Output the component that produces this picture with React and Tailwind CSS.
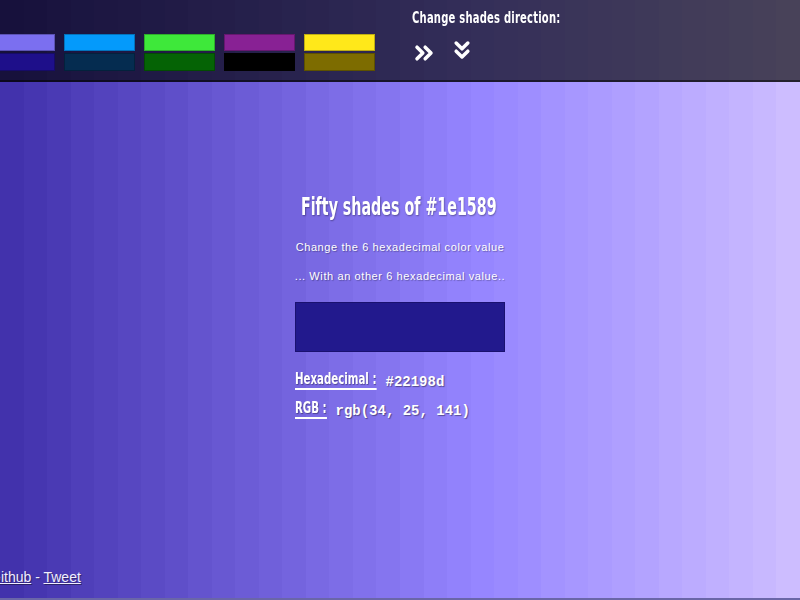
import React from 'react';
import { ChevronsRight, ChevronsDown } from 'lucide-react';

const swatches = [
  { top: '#7b6ff0', bottom: '#1e0f8a' },
  { top: '#049afb', bottom: '#052c50' },
  { top: '#3ee83a', bottom: '#056305' },
  { top: '#882194', bottom: '#000000' },
  { top: '#ffe81a', bottom: '#7d6c00' },
];

// 34 visible shades, each a bit lighter than the one before
function stripes() {
  const n = 34;
  const stops = [];
  for (let i = 0; i < n; i++) {
    const r = Math.min(255, Math.round(66 + 4.2 * i));
    const g = Math.min(255, Math.round(50 + 4.2 * i));
    const b = Math.min(255, Math.round(172 + 4.2 * i));
    const from = ((i * 100) / n).toFixed(3);
    const to = (((i + 1) * 100) / n).toFixed(3);
    stops.push(`rgb(${r},${g},${b}) ${from}% ${to}%`);
  }
  return `linear-gradient(to right, ${stops.join(', ')})`;
}

// narrow bold face (no Oswald offline, so squeeze DejaVu Sans condensed)
const narrow = "font-['DejaVu_Sans',sans-serif] font-stretch-condensed font-bold inline-block origin-left";

export default function App() {
  return (
    <div
      className="w-full h-[600px] overflow-hidden flex flex-col font-['Liberation_Sans',Arial,sans-serif] text-white"
      style={{ backgroundImage: stripes() }}
    >
      {/* Header */}
      <div className="h-[82px] shrink-0 bg-black/65 border-b-2 border-black/50 flex">
        <div className="flex gap-[9px] ml-[-16px] pt-[34px]">
          {swatches.map((s, i) => (
            <div key={i} className="flex flex-col gap-[2px] cursor-pointer">
              <div className="w-[71px] h-[17px] border border-black/25" style={{ backgroundColor: s.top }} />
              <div className="w-[71px] h-[18px] border border-black/25" style={{ backgroundColor: s.bottom }} />
            </div>
          ))}
        </div>
        <div className="ml-[37px] pt-[6px]">
          <div className="w-[150px] whitespace-nowrap">
            <span className={`${narrow} text-[15px] scale-x-[0.74] tracking-[0.3px]`}>Change shades direction:</span>
          </div>
          <div className="flex gap-[10px] mt-[9px]">
            <ChevronsRight size={28} strokeWidth={3} className="text-white -ml-[2px]" />
            <ChevronsDown size={28} strokeWidth={3} className="text-white -mt-[3px]" />
          </div>
        </div>
      </div>

      {/* Main */}
      <div className="flex-1 flex flex-col items-center pt-[109px]">
        <div className="w-[198px] whitespace-nowrap">
          <h1 className={`${narrow} text-[24px] leading-[32px] scale-x-[0.66] [text-shadow:1px_1px_2px_rgba(0,0,0,0.35)]`}>
            Fifty shades of #1e1589
          </h1>
        </div>
        <p className="mt-[16px] text-[11px] tracking-[0.6px] [text-shadow:1px_1px_1px_rgba(0,0,0,0.3)]">
          Change the 6 hexadecimal color value
        </p>
        <p className="mt-[12px] text-[11px] tracking-[0.6px] [text-shadow:1px_1px_1px_rgba(0,0,0,0.3)]">
          ... With an other 6 hexadecimal value..
        </p>
        <div className="w-[210px] -ml-[1px]">
          <div className="mt-[18px] w-[210px] h-[50px] bg-[#22198d] border border-[#1a1170]" />
          <div className="mt-[15px] flex items-end">
            <div className="w-[91px] whitespace-nowrap">
              <span className={`${narrow} text-[16px] leading-[18px] scale-x-[0.71] border-b-2 border-white [text-shadow:1px_1px_1px_rgba(0,0,0,0.35)]`}>
                Hexadecimal :
              </span>
            </div>
            <span className="font-['Liberation_Mono',monospace] font-bold text-[14px] leading-[18px] [text-shadow:1px_1px_1px_rgba(0,0,0,0.4)]">
              #22198d
            </span>
          </div>
          <div className="mt-[5px] flex items-end">
            <div className="w-[41px] whitespace-nowrap">
              <span className={`${narrow} text-[16px] leading-[18px] scale-x-[0.71] border-b-2 border-white [text-shadow:1px_1px_1px_rgba(0,0,0,0.35)]`}>
                RGB :
              </span>
            </div>
            <span className="font-['Liberation_Mono',monospace] font-bold text-[14px] leading-[18px] [text-shadow:1px_1px_1px_rgba(0,0,0,0.4)]">
              rgb(34, 25, 141)
            </span>
          </div>
        </div>
      </div>

      {/* Footer */}
      <div className="ml-[-10px] pb-[10px] text-[14px] text-[#f0eeff] [text-shadow:1px_1px_1px_rgba(0,0,0,0.4)]">
        <a href="#" className="underline">Github</a>
        <span> - </span>
        <a href="#" className="underline">Tweet</a>
      </div>
      <div className="h-[2px] bg-[#6a66a8]" />
    </div>
  );
}
